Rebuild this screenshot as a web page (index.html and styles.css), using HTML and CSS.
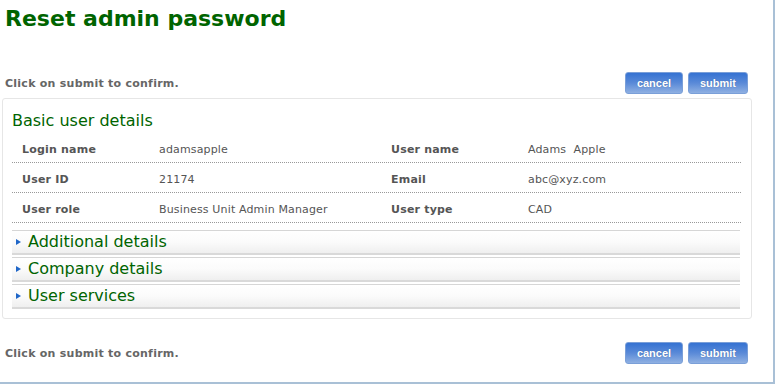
FILE: index.html
```html
<!DOCTYPE html>
<html>
<head>
<meta charset="utf-8">
<link rel="stylesheet" href="styles.css">
</head>
<body>
<div class="page">
  <h1 class="title">Reset admin password</h1>
  <div class="toolbar top">
    <span class="hint">Click on submit to confirm.</span>
    <div class="btns">
      <button class="btn cancel">cancel</button>
      <button class="btn submit">submit</button>
    </div>
  </div>
  <div class="panel">
    <h2 class="panel-title">Basic user details</h2>
    <div class="grid">
      <div class="row">
        <span class="lbl">Login name</span><span class="val">adamsapple</span>
        <span class="lbl">User name</span><span class="val">Adams&nbsp; Apple</span>
      </div>
      <div class="row">
        <span class="lbl">User ID</span><span class="val">21174</span>
        <span class="lbl">Email</span><span class="val">abc@xyz.com</span>
      </div>
      <div class="row">
        <span class="lbl">User role</span><span class="val">Business Unit Admin Manager</span>
        <span class="lbl">User type</span><span class="val">CAD</span>
      </div>
    </div>
    <div class="acc">
      <div class="bar"><span class="tri"></span>Additional details</div>
      <div class="bar"><span class="tri"></span>Company details</div>
      <div class="bar"><span class="tri"></span>User services</div>
    </div>
  </div>
  <div class="toolbar bottom">
    <span class="hint">Click on submit to confirm.</span>
    <div class="btns">
      <button class="btn cancel">cancel</button>
      <button class="btn submit">submit</button>
    </div>
  </div>
</div>
</body>
</html>
```
FILE: styles.css
```css
html, body { margin: 0; padding: 0; background: #fff; }
body { font-family: "DejaVu Sans", Verdana, sans-serif; }
.page {
  width: 773px;
  height: 382px;
  border-right: 2px solid #a9c0d6;
  border-bottom: 2px solid #a9c0d6;
  box-sizing: content-box;
  overflow: hidden;
}
.title {
  margin: 0;
  padding: 6px 0 0 5px;
  font-size: 22px;
  line-height: 26px;
  font-weight: bold;
  color: #006400;
}
.toolbar {
  width: 748px;
  display: flex;
  align-items: center;
  justify-content: space-between;
}
.toolbar.top { margin-top: 40px; }
.toolbar.bottom { margin-top: 23px; }
.hint {
  padding-left: 5px;
  font-size: 11px;
  letter-spacing: 0.25px;
  font-weight: bold;
  color: #666;
}
.btns { display: flex; gap: 5px; }
.btn {
  height: 22px;
  padding: 0;
  border: 1px solid #7a9fd8;
  border-radius: 3px;
  background: linear-gradient(#3572d2, #5a8ad8 50%, #8fb0e2);
  color: #fff;
  font-family: "Liberation Sans", Arial, sans-serif;
  font-weight: bold;
  font-size: 11px;
  text-shadow: 0 0 1px rgba(0,0,0,0.25);
}
.cancel { width: 58px; }
.submit { width: 60px; }
.panel {
  margin: 4px 0 0 2px;
  width: 750px;
  border: 1px solid #e6e6e6;
  border-radius: 3px;
  padding: 0 10px 9px 9px;
  box-sizing: border-box;
}
.panel-title {
  margin: 0;
  padding: 12px 0 0 0;
  font-size: 16px;
  line-height: 20px;
  font-weight: normal;
  color: #006400;
}
.grid { width: 729px; margin-top: 2px; }
.row {
  display: grid;
  grid-template-columns: 147px 232px 137px 1fr;
  height: 30px;
  box-sizing: border-box;
  padding-top: 4px;
  line-height: 25px;
  border-bottom: 1px dotted #999;
  font-size: 11px;
  color: #555;
}
.lbl { font-weight: bold; letter-spacing: 0.2px; }
.val { letter-spacing: 0.15px; }
.row .lbl:first-child { padding-left: 10px; }
.acc { margin-top: 7px; width: 728px; display: flex; flex-direction: column; gap: 2px; }
.bar {
  height: 25px;
  box-sizing: border-box;
  border-top: 1px solid #d6d6d6;
  border-bottom: 2px solid #d9d9d9;
  background: linear-gradient(#ffffff, #fbfbfb 50%, #efefef);
  font-size: 16px;
  line-height: 20px;
  color: #006400;
  display: flex;
  align-items: center;
  padding-left: 4px;
}
.tri {
  width: 0; height: 0;
  border-top: 3px solid transparent;
  border-bottom: 3px solid transparent;
  border-left: 5px solid #1f66c8;
  margin-right: 7px;
}
```
